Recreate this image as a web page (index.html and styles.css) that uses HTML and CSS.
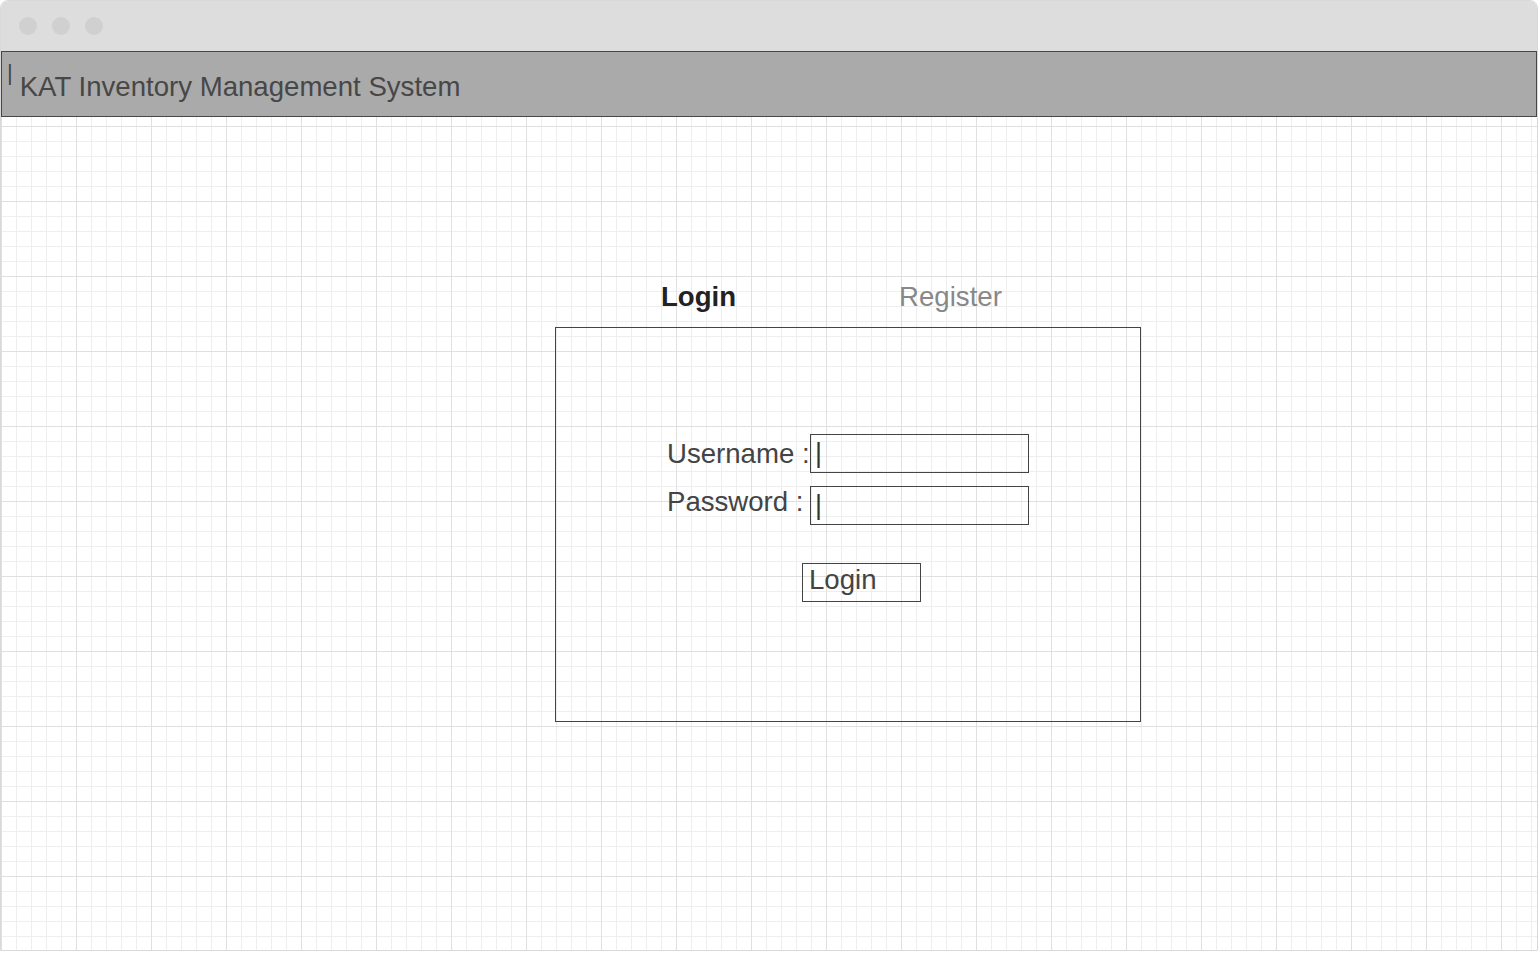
FILE: index.html
```html
<!DOCTYPE html>
<html lang="en">
<head>
<meta charset="utf-8">
<title>KAT Inventory Management System</title>
<link rel="stylesheet" href="styles.css">
</head>
<body>
<div class="window">
  <div class="titlebar">
    <span class="dot"></span>
    <span class="dot"></span>
    <span class="dot"></span>
  </div>
  <div class="header">
    <span class="caret">|</span>
    <span class="title">KAT Inventory Management System</span>
  </div>
  <div class="canvas">
    <div class="tabs">
      <span class="tab tab-active">Login</span>
      <span class="tab">Register</span>
    </div>
    <div class="panel">
      <div class="form">
        <span class="label">Username :</span>
        <div class="field">|</div>
        <span class="label label-raised">Password :</span>
        <div class="field">|</div>
      </div>
      <div class="button">Login</div>
    </div>
  </div>
</div>
</body>
</html>
```
FILE: styles.css
```css
html, body {
  margin: 0;
  padding: 0;
  background: #ffffff;
}

body {
  font-family: "Liberation Sans", Arial, sans-serif;
  color: #444444;
}

.window {
  width: 1536px;
  height: 949px;
  border: 1px solid #d9d9d9;
  border-radius: 8px 8px 0 0;
  display: flex;
  flex-direction: column;
  overflow: hidden;
}

.titlebar {
  height: 50px;
  flex: none;
  background: #dddddd;
  display: flex;
  align-items: flex-start;
  gap: 15px;
  padding: 16px 0 0 18px;
  box-sizing: border-box;
}

.dot {
  width: 18px;
  height: 18px;
  border-radius: 50%;
  background: #d0d0d0;
}

.header {
  height: 66px;
  flex: none;
  box-sizing: border-box;
  background: #aaaaaa;
  border: 1px solid #474747;
  display: flex;
  align-items: flex-start;
  padding-left: 5px;
}

.caret {
  font-size: 22px;
  line-height: 22px;
  margin-top: 10px;
  color: #444444;
}

.title {
  font-size: 27.6px;
  line-height: 32px;
  margin-top: 19px;
  margin-left: 7px;
  color: #474747;
}

.canvas {
  flex: 1;
  padding: 164px 0 0 554px;
  box-sizing: border-box;
  background-color: #ffffff;
  background-image:
    linear-gradient(to right, #e0e0e0 1px, transparent 1px),
    linear-gradient(to bottom, #e0e0e0 1px, transparent 1px),
    linear-gradient(to right, #eeeeee 1px, transparent 1px),
    linear-gradient(to bottom, #eeeeee 1px, transparent 1px);
  background-size: 75px 75px, 75px 75px, 15px 15px, 15px 15px;
  background-position: 0 9px, 0 9px, 0 9px, 0 9px;
}

.tabs {
  display: flex;
  gap: 163px;
  padding-left: 106px;
  height: 32px;
  margin-bottom: 14px;
}

.tab {
  font-size: 27.6px;
  line-height: 32px;
  color: #888888;
}

.tab-active {
  font-weight: bold;
  color: #222222;
}

.panel {
  width: 586px;
  height: 395px;
  box-sizing: border-box;
  border: 1px solid #444444;
  padding: 106px 0 0 109px;
}

.form {
  display: grid;
  grid-template-columns: 145px 219px;
  row-gap: 13px;
}

.label {
  font-size: 27.6px;
  line-height: 39px;
  height: 39px;
  padding-left: 2px;
  color: #444444;
  white-space: nowrap;
}

.label-raised {
  margin-top: -4px;
}

.field {
  height: 39px;
  box-sizing: border-box;
  border: 1px solid #444444;
  padding-left: 4px;
  font-size: 27px;
  line-height: 37px;
  color: #333333;
}

.button {
  margin: 38px 0 0 137px;
  width: 119px;
  height: 39px;
  box-sizing: border-box;
  border: 1px solid #444444;
  padding-left: 6px;
  font-size: 27.6px;
  line-height: 31px;
  color: #444444;
}
```
